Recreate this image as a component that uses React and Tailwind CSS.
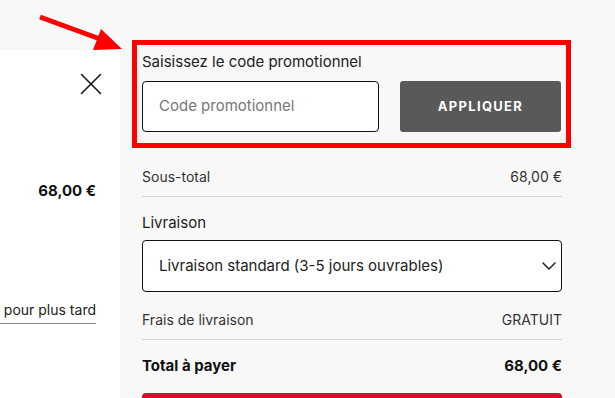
import React from "react";
import { X, ChevronDown } from "lucide-react";

const Row = ({ label, value, bold }) => (
  <div
    className={`flex justify-between items-center h-5 ${
      bold ? "font-bold text-[15px] text-[#111]" : "text-[14px] text-[#333]"
    }`}
  >
    <span>{label}</span>
    <span>{value}</span>
  </div>
);

export default function App() {
  return (
    <div
      className="relative w-[615px] h-[398px] overflow-hidden bg-[#f8f8f8] flex"
      style={{ fontFamily: "Inter, 'Liberation Sans', sans-serif" }}
    >
      {/* left cart panel */}
      <div className="w-[120px] mt-[50px] bg-white relative">
        <div className="flex justify-end pr-[10px] pt-[15px]">
          <X size={38} strokeWidth={0.95} className="text-[#111]" />
        </div>
        <div className="mt-[77px] pr-[24px] text-right text-[15px] font-bold text-[#111]">
          68,00 €
        </div>
        <div className="mt-[96px] w-[96px] border-b border-[#888] pb-[3px] flex justify-end">
          <span className="whitespace-nowrap text-[14px] text-[#222]">pour plus tard</span>
        </div>
      </div>

      {/* summary column */}
      <div className="ml-[12px] pt-[40px] w-[439px]">
        <div className="border-[5px] border-[#ff0000] h-[108px] px-[5px] pt-[7px]">
          <div className="text-[15px] leading-5 text-[#222]">
            Saisissez le code promotionnel
          </div>
          <div className="flex gap-[21px] mt-[9px]">
            <div className="w-[237px] h-[51px] border border-[#111] rounded-[4px] bg-white flex items-center pl-[16px] text-[15px] text-[#777]">
              Code promotionnel
            </div>
            <button className="w-[161px] h-[51px] rounded-[3px] bg-[#595959] text-white text-[13px] font-bold tracking-[0.1em]">
              APPLIQUER
            </button>
          </div>
        </div>

        <div className="pl-[10px] pr-[9px]">
          <div className="mt-[18px]">
            <Row label="Sous-total" value="68,00 €" />
          </div>
          <div className="mt-[10px] border-t border-[#d6d6d6]" />
          <div className="mt-[16px] text-[15px] leading-5 text-[#222]">Livraison</div>
          <div className="mt-[7px] h-[52px] border border-[#111] rounded-[4px] bg-white flex items-center justify-between pl-[16px] pr-0 text-[15px] text-[#222]">
            <span>Livraison standard (3-5 jours ouvrables)</span>
            <ChevronDown size={24} strokeWidth={1.5} className="text-[#222]" />
          </div>
          <div className="mt-[17px]">
            <Row label="Frais de livraison" value="GRATUIT" />
          </div>
          <div className="mt-[10px] border-t border-[#d6d6d6]" />
          <div className="mt-[16px]">
            <Row label="Total à payer" value="68,00 €" bold />
          </div>
          <div className="mt-[17px] h-[40px] rounded-[4px] bg-[#d4102f]" />
        </div>
      </div>

      {/* annotation arrow */}
      <svg
        className="absolute left-0 top-0 pointer-events-none"
        width="615"
        height="398"
      >
        <line x1="40" y1="17" x2="100" y2="39" stroke="#ff0000" strokeWidth="5" />
        <polygon points="122,49 93,50 101,29" fill="#ff0000" />
      </svg>
    </div>
  );
}
